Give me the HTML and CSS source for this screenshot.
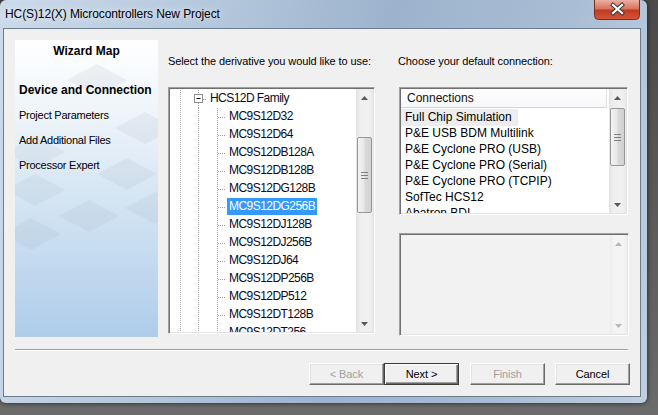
FILE: index.html
```html
<!DOCTYPE html>
<html>
<head>
<meta charset="utf-8">
<title>HC(S)12(X) Microcontrollers New Project</title>
<link rel="stylesheet" href="styles.css">
</head>
<body>
<div class="window">
  <div class="titlebar">
    <span class="title">HC(S)12(X) Microcontrollers New Project</span>
    <div class="close">
      <svg width="46" height="20" viewBox="0 0 46 20">
        <defs>
          <linearGradient id="cg" x1="0" y1="0" x2="0" y2="1">
            <stop offset="0" stop-color="#eab0a2"/>
            <stop offset="0.45" stop-color="#d7735d"/>
            <stop offset="0.52" stop-color="#c03a20"/>
            <stop offset="1" stop-color="#d4573a"/>
          </linearGradient>
        </defs>
        <path d="M0.5 0 V15.5 Q0.5 19.5 4.5 19.5 H41.5 Q45.5 19.5 45.5 15.5 V0" fill="url(#cg)" stroke="#7a2e20" stroke-width="1"/>
        <path d="M19 5 L28 13 M28 5 L19 13" stroke="#3b3b3b" stroke-width="4.2" stroke-linecap="square"/>
        <path d="M19 5 L28 13 M28 5 L19 13" stroke="#ffffff" stroke-width="2.2" stroke-linecap="square"/>
      </svg>
    </div>
  </div>
  <div class="client">
    <div class="main">
      <div class="wizard">
        <div class="wz-title">Wizard Map</div>
        <div class="wz-items">
          <div class="wz-item current">Device and Connection</div>
          <div class="wz-item">Project Parameters</div>
          <div class="wz-item">Add Additional Files</div>
          <div class="wz-item">Processor Expert</div>
        </div>
      </div>
      <div class="col-mid">
        <div class="label">Select the derivative you would like to use:</div>
        <div class="tree box">
          <div class="tree-view">
            <div class="row">
              <span class="g g1"></span>
              <span class="gsvg">
                <svg width="19" height="18" viewBox="0 0 19 18">
                  <path d="M10.5 0 V4 M10.5 13 V18" stroke="#a0a0a0" stroke-width="1" stroke-dasharray="1 1"/>
                  <path d="M15 9.5 H19" stroke="#a0a0a0" stroke-width="1" stroke-dasharray="1 1"/>
                  <rect x="6.5" y="4.5" width="8" height="8" fill="#fff" stroke="#919191"/>
                  <path d="M8.5 8.5 H12.5" stroke="#000" stroke-width="1"/>
                </svg>
              </span>
              <span class="tx">HCS12D Family</span>
            </div>
            <div class="row"><span class="g g1"></span><span class="g"></span><span class="g g3"></span><span class="tx">MC9S12D32</span></div>
            <div class="row"><span class="g g1"></span><span class="g"></span><span class="g g3"></span><span class="tx">MC9S12D64</span></div>
            <div class="row"><span class="g g1"></span><span class="g"></span><span class="g g3"></span><span class="tx">MC9S12DB128A</span></div>
            <div class="row"><span class="g g1"></span><span class="g"></span><span class="g g3"></span><span class="tx">MC9S12DB128B</span></div>
            <div class="row"><span class="g g1"></span><span class="g"></span><span class="g g3"></span><span class="tx">MC9S12DG128B</span></div>
            <div class="row"><span class="g g1"></span><span class="g"></span><span class="g g3"></span><span class="tx sel">MC9S12DG256B</span></div>
            <div class="row"><span class="g g1"></span><span class="g"></span><span class="g g3"></span><span class="tx">MC9S12DJ128B</span></div>
            <div class="row"><span class="g g1"></span><span class="g"></span><span class="g g3"></span><span class="tx">MC9S12DJ256B</span></div>
            <div class="row"><span class="g g1"></span><span class="g"></span><span class="g g3"></span><span class="tx">MC9S12DJ64</span></div>
            <div class="row"><span class="g g1"></span><span class="g"></span><span class="g g3"></span><span class="tx">MC9S12DP256B</span></div>
            <div class="row"><span class="g g1"></span><span class="g"></span><span class="g g3"></span><span class="tx">MC9S12DP512</span></div>
            <div class="row"><span class="g g1"></span><span class="g"></span><span class="g g3"></span><span class="tx">MC9S12DT128B</span></div>
            <div class="row"><span class="g g1"></span><span class="g"></span><span class="g g3"></span><span class="tx">MC9S12DT256</span></div>
          </div>
          <div class="sb">
            <div class="arr"><svg width="7" height="4" viewBox="0 0 7 4"><polygon points="0,4 3.5,0 7,4" fill="#5a5a5a"/></svg></div>
            <div class="track">
              <div class="thumb tree-thumb">
                <svg width="7" height="7" viewBox="0 0 7 7"><path d="M0 0.5 H7 M0 3.5 H7 M0 6.5 H7" stroke="#7f7f7f"/></svg>
              </div>
            </div>
            <div class="arr"><svg width="7" height="4" viewBox="0 0 7 4"><polygon points="0,0 7,0 3.5,4" fill="#5a5a5a"/></svg></div>
          </div>
        </div>
      </div>
      <div class="col-right">
        <div class="label">Choose your default connection:</div>
        <div class="conn box">
          <div class="lv">
            <div class="lv-head">Connections</div>
            <div class="lv-items">
              <div class="lv-item"><span class="focus">Full Chip Simulation</span></div>
              <div class="lv-item">P&amp;E USB BDM Multilink</div>
              <div class="lv-item">P&amp;E Cyclone PRO (USB)</div>
              <div class="lv-item">P&amp;E Cyclone PRO (Serial)</div>
              <div class="lv-item">P&amp;E Cyclone PRO (TCPIP)</div>
              <div class="lv-item">SofTec HCS12</div>
              <div class="lv-item">Abatron BDI</div>
            </div>
          </div>
          <div class="sb">
            <div class="arr"><svg width="7" height="4" viewBox="0 0 7 4"><polygon points="0,4 3.5,0 7,4" fill="#5a5a5a"/></svg></div>
            <div class="track">
              <div class="thumb conn-thumb">
                <svg width="7" height="7" viewBox="0 0 7 7"><path d="M0 0.5 H7 M0 3.5 H7 M0 6.5 H7" stroke="#7f7f7f"/></svg>
              </div>
            </div>
            <div class="arr"><svg width="7" height="4" viewBox="0 0 7 4"><polygon points="0,0 7,0 3.5,4" fill="#5a5a5a"/></svg></div>
          </div>
        </div>
        <div class="desc box">
          <div class="desc-body"></div>
          <div class="sb sb-off">
            <div class="arr"><svg width="7" height="4" viewBox="0 0 7 4"><polygon points="0,4 3.5,0 7,4" fill="#b8b8b8"/></svg></div>
            <div class="track"></div>
            <div class="arr"><svg width="7" height="4" viewBox="0 0 7 4"><polygon points="0,0 7,0 3.5,4" fill="#b8b8b8"/></svg></div>
          </div>
        </div>
      </div>
    </div>
    <div class="sep"></div>
    <div class="buttons">
      <button class="btn" disabled>&lt; Back</button>
      <button class="btn default">Next &gt;</button>
      <button class="btn finish" disabled>Finish</button>
      <button class="btn cancel">Cancel</button>
    </div>
  </div>
</div>
</body>
</html>
```
FILE: styles.css
```css
* { box-sizing: border-box; margin: 0; padding: 0; }
html, body { width: 658px; height: 415px; overflow: hidden; }
body {
  background: linear-gradient(to bottom, #4a4a4a, #6b6b6b);
  font-family: "Liberation Sans", Arial, sans-serif;
  font-size: 11px;
  color: #000;
}
.window {
  width: 647px;
  height: 403px;
  display: flex;
  flex-direction: column;
  padding: 0 6px 6px 3px;
  border-radius: 6px 6px 6px 6px;
  background: linear-gradient(100deg, #ccdaea 0%, #b4c7dc 30%, #9db3cd 55%, #a9bdd4 80%, #bfcfe1 100%);
  box-shadow: 0 0 5px rgba(0,0,0,0.7);
}
.titlebar {
  height: 28px;
  flex: none;
  display: flex;
  justify-content: space-between;
  align-items: flex-start;
}
.title {
  font-size: 12px;
  line-height: 28px;
  margin-left: 2px;
  letter-spacing: -0.1px;
  color: #000;
  text-shadow: 0 0 6px rgba(255,255,255,0.9);
}
.close { display: flex; margin-right: 1px; }
.client {
  flex: 1;
  background: #f0f0f0;
  border: 1px solid #6a7b8e;
  padding: 11px 10px 0 11px;
  display: flex;
  flex-direction: column;
}
.main { display: flex; height: 297px; flex: none; }
.wizard {
  width: 143px;
  flex: none;
  background:
    url("data:image/svg+xml;utf8,<svg xmlns='http://www.w3.org/2000/svg' width='143' height='297'><g fill='%2390a4b8' fill-opacity='0.12'><polygon points='52,40 82,24 112,40 82,56'/><polygon points='100,88 130,72 160,88 130,104'/><polygon points='-10,112 20,96 50,112 20,128'/><polygon points='82,134 112,118 142,134 112,150'/><polygon points='44,176 74,160 104,176 74,192'/><polygon points='-14,194 16,178 46,194 16,210'/><polygon points='110,168 140,152 170,168 140,184'/><polygon points='-10,150 20,134 50,150 20,166'/></g></svg>"),
    linear-gradient(to bottom, #ffffff 0%, #eef4fa 25%, #d3e4f3 55%, #aecdea 100%);
  display: flex;
  flex-direction: column;
  padding: 4px 0 0 4px;
}
.wz-title {
  font-weight: bold;
  font-size: 12px;
  line-height: 14px;
  text-align: center;
  padding-right: 4px;
}
.wz-items {
  margin-top: 25px;
  display: flex;
  flex-direction: column;
  gap: 11px;
}
.wz-item { font-size: 11px; line-height: 14px; letter-spacing: -0.25px; white-space: nowrap; }
.wz-item.current { font-weight: bold; font-size: 12px; letter-spacing: 0; }
.col-mid {
  width: 207px;
  flex: none;
  margin-left: 10px;
  padding-top: 15px;
  display: flex;
  flex-direction: column;
}
.col-right {
  width: 231px;
  flex: none;
  margin-left: 23px;
  padding-top: 15px;
  display: flex;
  flex-direction: column;
}
.label { line-height: 13px; height: 13px; white-space: nowrap; letter-spacing: -0.1px; }
.box {
  border: 1px solid;
  border-color: #a0a0a0 #ffffff #ffffff #a0a0a0;
  padding: 1px;
  box-shadow: inset 1px 1px #6f6f6f, inset -1px -1px #e3e3e3;
  display: flex;
  overflow: hidden;
}
.tree { margin-top: 19px; height: 247px; background: #fff; }
.tree-view { flex: 1; background: #fff; overflow: hidden; padding-top: 1px; }
.row { display: flex; height: 18px; }
.g {
  width: 19px;
  flex: none;
  background: repeating-linear-gradient(to bottom, #a0a0a0 0 1px, transparent 1px 2px) 10px 0 / 1px 100% no-repeat;
}
.g1 { width: 18px; }
.g3 {
  background:
    repeating-linear-gradient(to right, #a0a0a0 0 1px, transparent 1px 2px) 11px 9px / 8px 1px no-repeat,
    repeating-linear-gradient(to bottom, #a0a0a0 0 1px, transparent 1px 2px) 10px 0 / 1px 100% no-repeat;
}
.gsvg { width: 19px; flex: none; display: flex; }
.tx {
  margin-left: 1px;
  padding: 0 2px;
  height: 17px;
  line-height: 17px;
  font-size: 12px;
  letter-spacing: -0.55px;
  white-space: nowrap;
  color: #0a0a1e;
}
.tx.sel { background: #3399ff; color: #fff; }
.sb {
  width: 17px;
  flex: none;
  display: flex;
  flex-direction: column;
  background: linear-gradient(to right, #e2e2e2, #efefef 25%, #f1f1f1 75%, #e9e9e9);
}
.arr { height: 17px; flex: none; display: flex; align-items: center; justify-content: center; }
.track { flex: 1; display: flex; flex-direction: column; }
.thumb {
  margin: 0 1px;
  border: 1px solid #979797;
  border-radius: 2px;
  background: linear-gradient(to right, #f3f3f3, #e8e8e8 45%, #d9d9d9 55%, #d2d2d2);
  display: flex;
  align-items: center;
  justify-content: center;
}
.tree-thumb { margin-top: 31px; height: 76px; }
.conn-thumb { margin-top: 2px; height: 58px; }
.conn { margin-top: 19px; margin-left: 1px; width: 229px; height: 128px; background: #fff; }
.lv { flex: 1; background: #fff; overflow: hidden; }
.lv-head {
  width: 206px;
  height: 19px;
  line-height: 18px;
  padding-left: 6px;
  font-size: 12px;
  color: #111;
  background: linear-gradient(to bottom, #ffffff, #f6f7f9);
  border-bottom: 1px solid #d5d5d5;
  border-right: 1px solid #e3e3e3;
}
.lv-items { padding-top: 1px; }
.lv-item { height: 16px; line-height: 16px; font-size: 12px; padding-left: 4px; white-space: nowrap; color: #000; }
.lv-item .focus { display: inline-block; background: #ededed; margin-left: -4px; padding: 0 6px 0 4px; height: 17px; }
.desc { margin-top: 18px; margin-left: 1px; width: 230px; height: 103px; background: #f2f2f2; }
.desc-body { flex: 1; background: #f2f2f2; }
.sb-off { background: linear-gradient(to right, #ececec, #f4f4f4 25%, #f4f4f4 75%, #eeeeee); }
.sep {
  margin-top: 12px;
  width: 613px;
  height: 2px;
  border-top: 1px solid #a0a0a0;
  border-bottom: 1px solid #ffffff;
  flex: none;
}
.buttons {
  margin-top: 12px;
  display: flex;
  justify-content: flex-end;
}
.btn {
  width: 75px;
  height: 22px;
  font-family: "Liberation Sans", Arial, sans-serif;
  font-size: 11px;
  color: #000;
  background: #f0f0f0;
  border: 1px solid;
  border-color: #ffffff #696969 #696969 #ffffff;
  box-shadow: inset -1px -1px #a0a0a0, inset 1px 1px #e3e3e3;
  letter-spacing: -0.1px;
}
.btn:disabled { color: #a0a0a0; }
.btn.default {
  border: 1px solid #3c3c3c;
  box-shadow: inset 1px 1px #ffffff, inset -1px -1px #696969, inset -2px -2px #a0a0a0;
}
.btn.finish { margin-left: 11px; }
.btn.cancel { margin-left: 10px; }
```
